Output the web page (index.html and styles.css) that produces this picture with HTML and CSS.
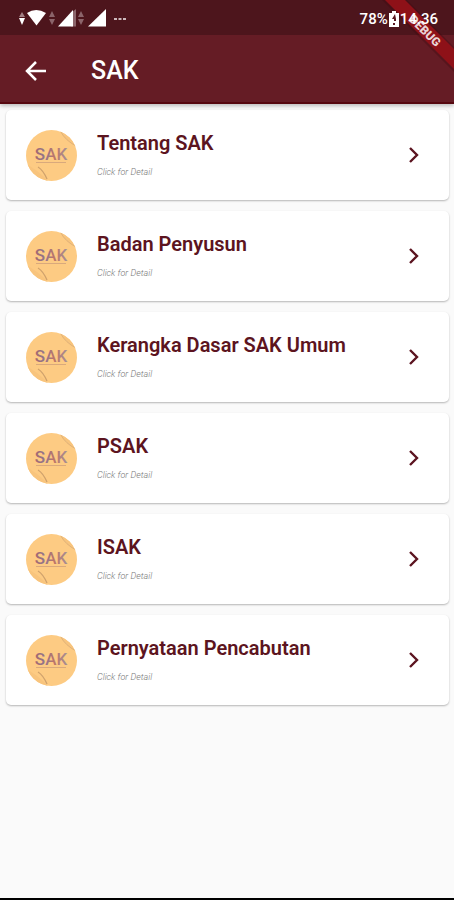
FILE: index.html
```html
<!DOCTYPE html>
<html lang="id">
<head>
<meta charset="utf-8">
<meta name="viewport" content="width=device-width, initial-scale=1">
<title>SAK</title>
<link rel="stylesheet" href="styles.css">
</head>
<body>
<svg class="defs" width="0" height="0" aria-hidden="true">
  <defs>
    <clipPath id="disc"><circle cx="25.500" cy="25.500" r="25.500"/></clipPath>
    <linearGradient id="ink" x1="0" y1="0" x2="1" y2="0">
      <stop offset="0" stop-color="#a8686c"/>
      <stop offset=".3" stop-color="#8f7590"/>
      <stop offset=".6" stop-color="#bd7568"/>
      <stop offset="1" stop-color="#a58f98"/>
    </linearGradient>
    <symbol id="badge" viewBox="0 0 51 51">
      <g clip-path="url(#disc)">
        <rect width="51" height="51" fill="#fdcb83"/>
        <path d="M34 1Q38 10 51 17V0Z" fill="#f8c47d"/>
        <path d="M35 2Q39 10 50 16" fill="none" stroke="#dfb27a" stroke-width="1"/>
        <path d="M0 34Q12 40 22 51H0Z" fill="#f8c47d"/>
        <path d="M12 37Q17 40 21 49" fill="none" stroke="#d0a26c" stroke-width="1.300"/>
        <path d="M10 32.500H40" stroke="#d9a97c" stroke-width="1"/>
      </g>
      <text class="badge-text" x="25" y="30" text-anchor="middle" fill="url(#ink)">SAK</text>
    </symbol>
    <symbol id="chevron" viewBox="0 0 24 24">
      <path d="M8 5l7 7-7 7" fill="none" stroke="#5c1420" stroke-width="2.400"/>
    </symbol>
  </defs>
</svg>

<div class="screen">
  <header class="top">
    <div class="status">
      <svg class="signals" width="116" height="20" viewBox="0 0 116 20" aria-hidden="true">
        <path d="M4 8l3-5 3 5z" fill="#a37f83"/><path d="M4 9h6l-3 7z" fill="#fff"/>
        <path d="M12 4Q21-2 31 4L21.500 16.500Z" fill="#fff"/>
        <path d="M34 8l3-6 3 6zM34 10h6l-3 6z" fill="#8b646a"/>
        <path d="M56 4L61 0V17.500H56Z" fill="#8b646a"/>
        <path d="M43 17.500L58 1V17.500Z" fill="#fff"/>
        <path d="M63 8l3-6 3 6zM63 10h6l-3 6z" fill="#8b646a"/>
        <path d="M73 17.500L91 0V17.500Z" fill="#fff"/>
        <path d="M99 9h3v2h-3zM103.500 9h3v2h-3zM108 9h3v2h-3z" fill="#cdb9bc"/>
      </svg>
      <div class="clock">
        <span>78%</span>
        <svg width="10" height="16" viewBox="0 0 10 16" aria-hidden="true">
          <path d="M3 0h4v2h3v14H0V2h3z" fill="#fff"/>
          <path d="M6 3L3 8h2v2h2V8zM4 12h2v2H4z" fill="#5a1820"/>
        </svg>
        <time>14.36</time>
      </div>
    </div>
    <div class="appbar">
      <button class="back" type="button" aria-label="Kembali">
        <svg width="22" height="20" viewBox="0 0 22 20" aria-hidden="true">
          <path d="M21 10H3M11 1L2 10l9 9" fill="none" stroke="#fff" stroke-width="2.500"/>
        </svg>
      </button>
      <h1>SAK</h1>
    </div>
    <svg class="ribbon" width="76" height="76" viewBox="0 0 76 76" aria-hidden="true">
      <path d="M4 0H29L76 47V72Z" fill="#40080f" opacity=".35"/>
      <path d="M7 0H27L76 49V69Z" fill="#8e1118"/>
      <text class="ribbon-text" transform="translate(47 31) rotate(45)" text-anchor="middle" y="4" fill="#e9d3d5">DEBUG</text>
    </svg>
  </header>

  <main>
    <ul class="list">
      <li><a class="card" href="#tentang"><svg class="avatar" aria-hidden="true"><use href="#badge"/></svg><span class="copy"><span class="title">Tentang SAK</span><span class="hint">Click for Detail</span></span><svg class="go" aria-hidden="true"><use href="#chevron"/></svg></a></li>
      <li><a class="card" href="#badan"><svg class="avatar" aria-hidden="true"><use href="#badge"/></svg><span class="copy"><span class="title">Badan Penyusun</span><span class="hint">Click for Detail</span></span><svg class="go" aria-hidden="true"><use href="#chevron"/></svg></a></li>
      <li><a class="card" href="#kerangka"><svg class="avatar" aria-hidden="true"><use href="#badge"/></svg><span class="copy"><span class="title">Kerangka Dasar SAK Umum</span><span class="hint">Click for Detail</span></span><svg class="go" aria-hidden="true"><use href="#chevron"/></svg></a></li>
      <li><a class="card" href="#psak"><svg class="avatar" aria-hidden="true"><use href="#badge"/></svg><span class="copy"><span class="title">PSAK</span><span class="hint">Click for Detail</span></span><svg class="go" aria-hidden="true"><use href="#chevron"/></svg></a></li>
      <li><a class="card" href="#isak"><svg class="avatar" aria-hidden="true"><use href="#badge"/></svg><span class="copy"><span class="title">ISAK</span><span class="hint">Click for Detail</span></span><svg class="go" aria-hidden="true"><use href="#chevron"/></svg></a></li>
      <li><a class="card" href="#pernyataan"><svg class="avatar" aria-hidden="true"><use href="#badge"/></svg><span class="copy"><span class="title">Pernyataan Pencabutan</span><span class="hint">Click for Detail</span></span><svg class="go" aria-hidden="true"><use href="#chevron"/></svg></a></li>
    </ul>
  </main>
</div>
</body>
</html>
```
FILE: styles.css
```css
* { box-sizing: border-box; }

body {
  margin: 0;
  background: #fafafa;
  font-family: Roboto, "Liberation Sans", sans-serif;
}

.defs { position: absolute; }

.screen {
  min-height: 100vh;
  border-bottom: 2px solid #000;
}

.top {
  position: relative;
  overflow: hidden;
  background: #651c25;
  color: #fff;
  border-bottom: 2px solid #560810;
  box-shadow: 0 2px 4px rgba(0, 0, 0, 0.25);
}

.status {
  display: flex;
  justify-content: space-between;
  align-items: center;
  height: 35px;
  padding: 2px 16px 0 15px;
  background: #4d151c;
}

.clock {
  position: relative;
  z-index: 2;
  display: flex;
  align-items: center;
  gap: 1px;
  font-size: 15px;
  font-weight: 500;
  line-height: 20px;
}

.appbar {
  display: flex;
  align-items: center;
  height: 67px;
  padding: 4px 16px 0;
}

.back {
  display: flex;
  align-items: center;
  justify-content: center;
  width: 40px;
  height: 40px;
  padding: 0;
  border: 0;
  background: none;
}

h1 {
  margin: 0 0 0 35px;
  font-size: 25px;
  font-weight: 500;
  line-height: 32px;
}

.ribbon {
  position: absolute;
  top: 0;
  right: 0;
}

.ribbon-text {
  font-size: 12px;
  font-weight: 900;
}

.list {
  display: flex;
  flex-direction: column;
  gap: 11px;
  margin: 0;
  padding: 6px 5px 11px 6px;
  list-style: none;
}

.card {
  display: flex;
  align-items: center;
  height: 90px;
  padding: 0 23px 0 20px;
  border-radius: 5px;
  background: #fff;
  box-shadow: 0 1px 2px rgba(0, 0, 0, 0.28);
  color: #5c1420;
  text-decoration: none;
}

.avatar {
  flex: none;
  width: 51px;
  height: 51px;
}

.badge-text {
  font-size: 17px;
  font-weight: 500;
}

.copy {
  display: flex;
  flex: 1;
  flex-direction: column;
  gap: 12px;
  margin-left: 20px;
  padding-bottom: 2px;
}

.title {
  font-size: 20px;
  font-weight: 600;
  line-height: 24px;
}

.hint {
  color: #777;
  font-size: 9px;
  font-style: italic;
  font-weight: 300;
  line-height: 10px;
}

.go {
  flex: none;
  width: 24px;
  height: 24px;
}
```
